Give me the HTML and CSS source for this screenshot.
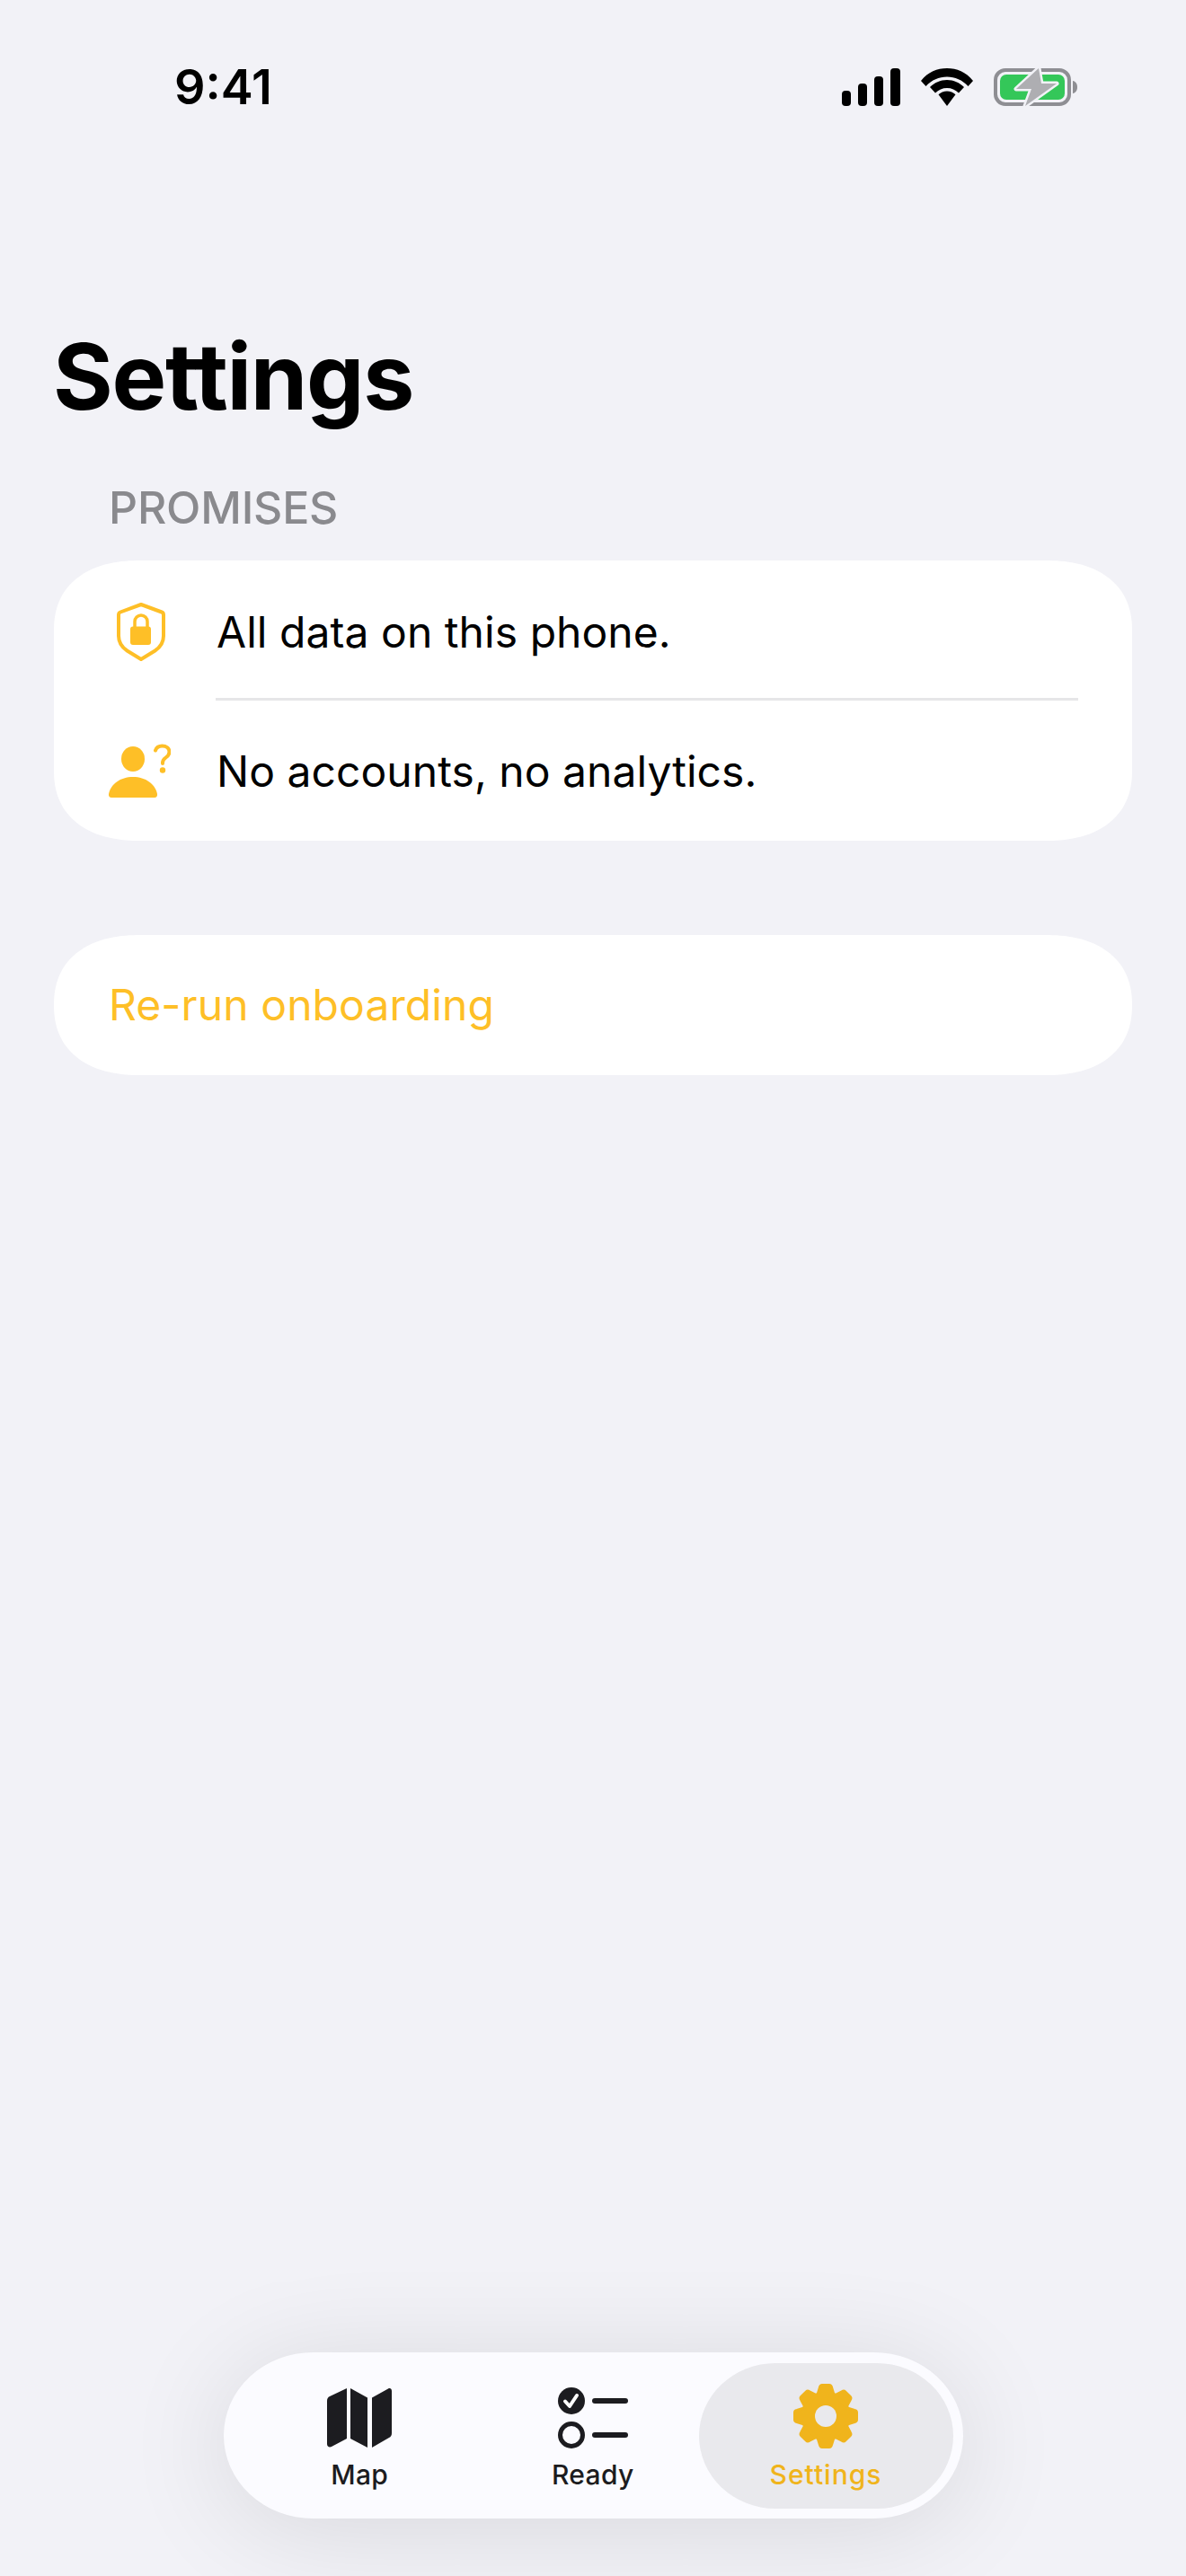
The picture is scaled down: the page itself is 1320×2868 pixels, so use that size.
FILE: index.html
```html
<!DOCTYPE html>
<html lang="en">
<head>
<meta charset="utf-8">
<title>Settings</title>
<link rel="stylesheet" href="styles.css">
</head>
<body>
<div class="screen">
  <header class="status">
    <span class="time">9:41</span>
    <div class="status-icons">
      <svg class="sig" width="65" height="42" viewBox="0 0 65 42"><rect x="0" y="25" width="10" height="17" rx="4"/><rect x="18" y="17" width="10" height="25" rx="4"/><rect x="36" y="9" width="10" height="33" rx="4"/><rect x="54" y="0" width="11" height="42" rx="4"/></svg>
      <svg class="wifi" width="58" height="42" viewBox="0 0 58 42"><path d="M29 0C18 0 8 4 0 14l5.500 6C12 13 20 9.500 29 9.500S46 13 52.500 20l5.500-6C50 4 40 0 29 0z"/><path d="M29 13c-7.500 0-14 3-19 8l6 6.500c3.500-3.500 8-5.500 13-5.500s9.500 2 13 5.500l6-6.500c-5-5-11.500-8-19-8z"/><path d="M29 25.500c-3.800 0-7 1.400-9.500 3.800L29 42l9.500-12.700c-2.500-2.400-5.700-3.800-9.500-3.800z"/></svg>
      <svg class="batt" width="94" height="44" viewBox="0 0 94 44">
        <rect x="2" y="3" width="82" height="38" rx="11" fill="none" stroke="#8e8e93" stroke-width="4"/>
        <rect x="7" y="8" width="72" height="28" rx="7" fill="#34c759"/>
        <path d="M88 15c3 .5 5 3 5 7s-2 6.500-5 7z" fill="#8e8e93"/>
        <path d="M50 1 25 24h17l-7 19 35-25H53z" fill="#aeaeb2" stroke="#f2f2f7" stroke-width="5" stroke-linejoin="round" paint-order="stroke"/>
      </svg>
    </div>
  </header>

  <h1 class="title">Settings</h1>
  <h2 class="section">PROMISES</h2>

  <section class="card">
    <div class="row row-first">
      <div class="row-icon">
        <svg width="54" height="65" viewBox="0 0 54 65"><path d="M27 2 50 10.500c1.300.5 2 1.500 2 3V37c0 7-3.500 12.500-9.500 16.500L27 63 11.500 53.500C5.500 49.500 2 44 2 37V13.500c0-1.500.7-2.500 2-3z" fill="none" stroke="#febf27" stroke-width="4" stroke-linejoin="round"/><path d="M20 27v-6a7 7 0 0 1 14 0v6" fill="none" stroke="#febf27" stroke-width="3.500"/><rect x="15" y="26.500" width="23" height="20.500" rx="3" fill="#febf27"/></svg>
      </div>
      <span class="row-text">All data on this phone.</span>
    </div>
    <div class="divider"></div>
    <div class="row row-last">
      <div class="row-icon">
        <svg class="person" width="70" height="62" viewBox="0 0 70 62"><ellipse cx="28" cy="17" rx="13" ry="14"/><path d="M1 56C3 45 14 37 28 37s25 8 27 19c.3 2.500-1 4-3 4H4c-2 0-3.300-1.500-3-4z"/><path d="M53 7.500c1-3 4-5 7.500-5 4.500 0 8 2.800 8 6.800 0 3-1.700 4.500-4 6.200-2.200 1.600-3.500 3-3.500 5.500v1" fill="none" stroke="#febf27" stroke-width="4" stroke-linecap="round"/><circle cx="61" cy="29.500" r="3.200"/></svg>
      </div>
      <span class="row-text">No accounts, no analytics.</span>
    </div>
  </section>

  <section class="card action">
    <span class="action-text">Re-run onboarding</span>
  </section>

  <nav class="tabbar">
    <div class="tab">
      <svg width="72" height="68" viewBox="0 0 72 68"><path d="M22 1v56L5 66c-2.500 1-5 0-5-3V15c0-2.500 1-4 3-5zM26 1l19 10.500V67L26 57zM50 11.500 68 1.500c2-1 4 0 4 2.500v47c0 2.500-1 4-3 5L50 67z" fill="#1c1c20"/></svg>
      <span class="tab-label">Map</span>
    </div>
    <div class="tab">
      <svg width="78" height="68" viewBox="0 0 78 68"><circle cx="15" cy="15" r="15" fill="#1c1c20"/><path d="M8 15.500l5 5.500 8-12" fill="none" stroke="#fff" stroke-width="4" stroke-linecap="round" stroke-linejoin="round"/><rect x="38" y="12" width="40" height="6" rx="3" fill="#1c1c20"/><circle cx="15" cy="53" r="12.500" fill="none" stroke="#1c1c20" stroke-width="5"/><rect x="38" y="50" width="40" height="6" rx="3" fill="#1c1c20"/></svg>
      <span class="tab-label">Ready</span>
    </div>
    <div class="tab tab-active">
      <svg width="72" height="72" viewBox="-36 -36 72 72">
        <defs><path id="tooth" d="M-9-24-6.500-32c.3-1.500 1.200-2.500 2.500-2.500H4c1.300 0 2.200 1 2.500 2.500L9-24z" stroke="#f0b41c" stroke-width="3" stroke-linejoin="round"/></defs>
        <circle r="27.500" fill="#f0b41c"/>
        <g fill="#f0b41c">
          <use href="#tooth"/><use href="#tooth" transform="rotate(45)"/><use href="#tooth" transform="rotate(90)"/><use href="#tooth" transform="rotate(135)"/><use href="#tooth" transform="rotate(180)"/><use href="#tooth" transform="rotate(225)"/><use href="#tooth" transform="rotate(270)"/><use href="#tooth" transform="rotate(315)"/>
        </g>
        <circle r="12" fill="#e9e9ed"/>
      </svg>
      <span class="tab-label">Settings</span>
    </div>
  </nav>
</div>
</body>
</html>
```

FILE: styles.css
```css
* { box-sizing: border-box; }
html, body { margin: 0; padding: 0; }
body {
  background: #f2f2f7;
  color: #000;
  font-family: Inter, "Liberation Sans", sans-serif;
}
.screen {
  display: flex;
  flex-direction: column;
  height: 2868px;
  padding: 0 60px;
  overflow: hidden;
}
.status {
  display: flex;
  align-items: center;
  justify-content: space-between;
  height: 52px;
  margin: 71px 60px 0 134px;
}
.time { font-size: 54px; font-weight: 600; line-height: 52px; }
.status-icons { display: flex; align-items: center; gap: 23px; }
.title {
  margin: 235px 0 0 -1px;
  font-size: 102px;
  line-height: 122px;
  font-weight: 700;
  letter-spacing: -1.3px;
  font-feature-settings: "calt" 0;
}
.section {
  margin: 56px 0 0 61px;
  font-size: 50px;
  line-height: 58px;
  font-weight: 550;
  letter-spacing: -0.2px;
  color: #8a8a8e;
}
.card {
  margin-top: 30px;
  background: #fff;
  border-radius: 96px / 78px;
  corner-shape: superellipse(1.2);
}
.row {
  display: flex;
  align-items: center;
}
.row-first { height: 153px; padding-top: 6px; }
.row-last { height: 156px; padding-top: 2px; }
.row-icon {
  display: flex;
  justify-content: center;
  width: 181px;
  padding-left: 12px;
  fill: #febf27;
}
.person { margin-left: -3px; }
.row-text { font-size: 48px; line-height: 58px; letter-spacing: 0.05px; }
.divider {
  height: 3px;
  margin: 0 60px 0 180px;
  background: #e6e6e8;
}
.action {
  display: flex;
  align-items: center;
  height: 156px;
  margin-top: 105px;
  padding-left: 61px;
}
.action-text { font-size: 48px; line-height: 58px; letter-spacing: 0.1px; color: #febf27; }
.tabbar {
  display: flex;
  align-items: stretch;
  align-self: center;
  width: 823px;
  height: 185px;
  margin-top: auto;
  margin-bottom: 64px;
  padding: 12px 23px 11px 22px;
  background: #fbfbff;
  border-radius: 100px / 93px;
  box-shadow: 0 12px 120px rgba(0, 0, 0, 0.11);
}
.tab {
  display: flex;
  flex: 1 1 0;
  flex-direction: column;
  align-items: center;
  justify-content: flex-end;
  gap: 11px;
  padding-bottom: 20px;
  color: #1c1c20;
}
.tab-active {
  flex: 0 0 283px;
  margin-inline: -12px;
  background: #e9e9ed;
  border-radius: 85px / 81px;
  color: #f0b41c;
}
.tab-label { font-size: 30px; line-height: 36px; font-weight: 450; letter-spacing: 0.3px; }
.tab-active .tab-label { font-weight: 500; letter-spacing: 1px; }
```
